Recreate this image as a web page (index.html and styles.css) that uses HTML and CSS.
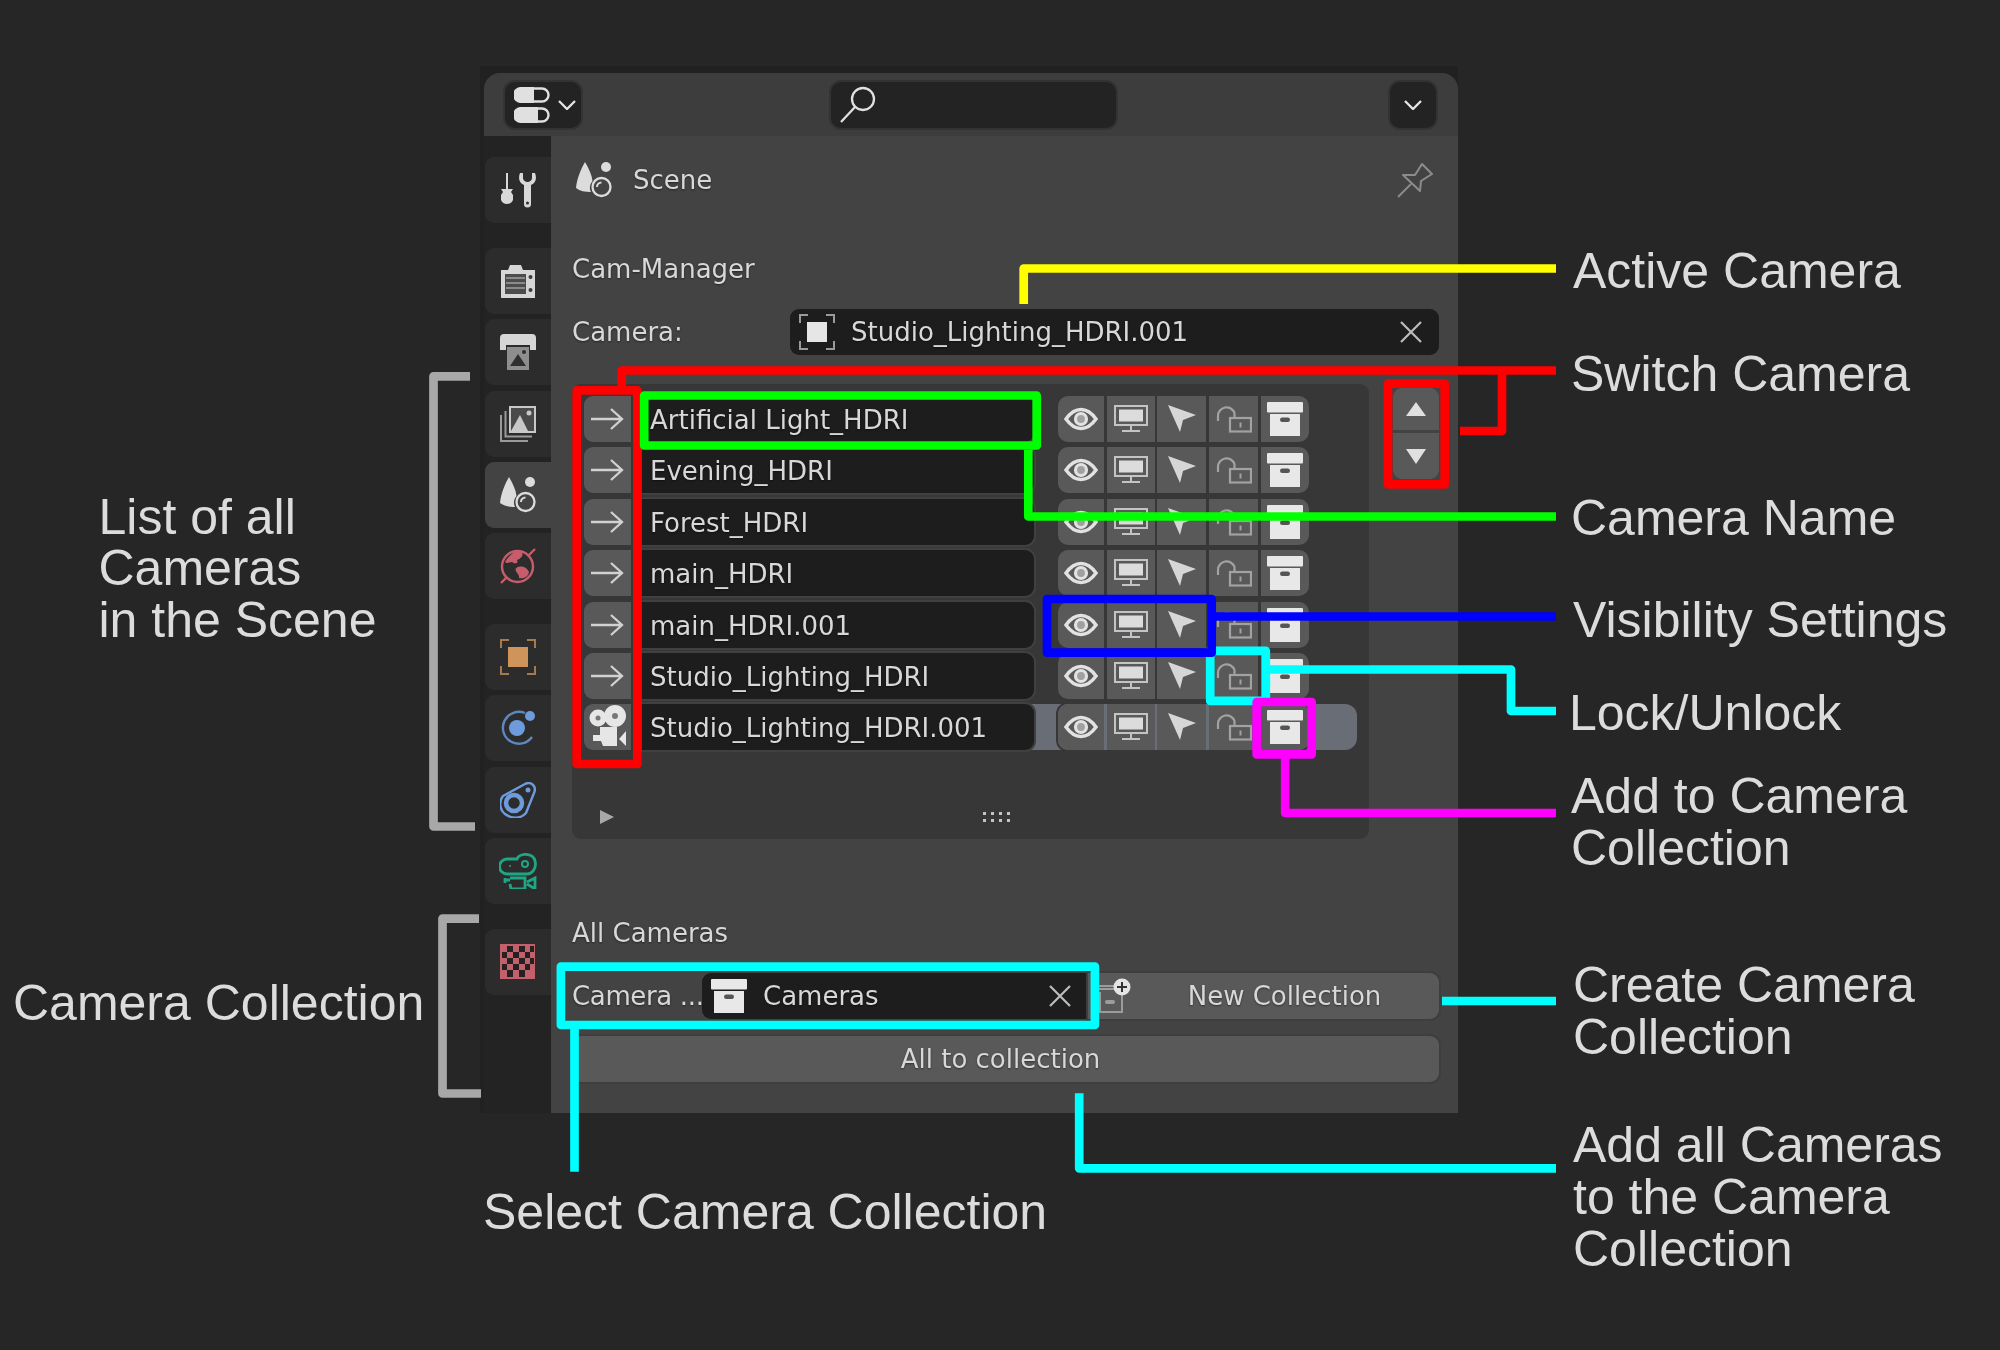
FILE: index.html
```html
<!DOCTYPE html>
<html lang="en">
<head>
<meta charset="utf-8">
<title>Cam-Manager</title>
<link rel="stylesheet" href="styles.css">
</head>
<body>
<svg class="defs" width="0" height="0" aria-hidden="true">
  <symbol id="arrow" viewBox="0 0 36 24"><path d="M1 12H32M21 2L32 12L21 22" fill="none" stroke="#d2d2d2" stroke-width="2.3"/></symbol>
  <symbol id="eye" viewBox="0 0 34 24"><path d="M2 12C7 5 12 2.500 17 2.500S27 5 32 12C27 19 22 21.500 17 21.500S7 19 2 12Z" fill="none" stroke="#e2e2e2" stroke-width="3.500"/><circle cx="17" cy="12" r="5.500" fill="#a0a0a0" stroke="#e2e2e2" stroke-width="3.200"/></symbol>
  <symbol id="monitor" viewBox="0 0 34 28"><rect x="1" y="1" width="32" height="19" fill="none" stroke="#c4c4c4" stroke-width="2"/><rect x="5" y="4.500" width="24" height="12" fill="#dcdcdc"/><path d="M17 20V25M8 26H26" stroke="#c4c4c4" stroke-width="2" fill="none"/></symbol>
  <symbol id="cursor" viewBox="0 0 28 28"><path d="M0 0L28 10L15 15L12 27Z" fill="#d6d6d6"/></symbol>
  <symbol id="lock" viewBox="0 0 36 28"><path d="M2 16V11A8.500 8.500 0 0 1 18.500 8V13" fill="none" stroke="#a2a2a2" stroke-width="2.200"/><rect x="14" y="13" width="21" height="13.500" fill="none" stroke="#a2a2a2" stroke-width="2.200"/><rect x="23.500" y="17.500" width="2" height="5" fill="#a2a2a2"/></symbol>
  <symbol id="box" viewBox="0 0 36 34"><rect x="0" y="0" width="36" height="10.500" rx="1" fill="#e8e8e8"/><path d="M3 12H33V34H3Z" fill="#e8e8e8"/><rect x="13" y="15.500" width="10" height="4.500" rx="2.200" fill="#555"/></symbol>
  <symbol id="x" viewBox="0 0 22 22"><path d="M1 1L21 21M21 1L1 21" stroke="#bdbdbd" stroke-width="2.200" fill="none"/></symbol>
  <symbol id="chev" viewBox="0 0 18 10"><path d="M1 1L9 9L17 1" stroke="#e6e6e6" stroke-width="2.300" fill="none"/></symbol>
  <symbol id="objsel" viewBox="0 0 36 36"><path d="M1 9V1H9M27 1H35V9M35 27V35H27M9 35H1V27" fill="none" stroke="#9a9a9a" stroke-width="2"/><rect x="8" y="8" width="20" height="20" fill="#e6e6e6"/></symbol>
  <symbol id="scene" viewBox="0 0 36 36"><path d="M9 0C13 7 16 13 16.500 19C14 22 13 26 15 30C9 30 4 29 0 26C1 16 5 7 9 0Z" fill="#dcdcdc"/><circle cx="30" cy="5" r="5" fill="#dcdcdc"/><circle cx="25.500" cy="25" r="9" fill="none" stroke="#dcdcdc" stroke-width="2.300"/><path d="M21 25A4.500 4.500 0 0 1 25.500 20.500" fill="none" stroke="#dcdcdc" stroke-width="2"/></symbol>
</svg>

<div class="window">
  <header class="topbar">
    <div class="hbtn editor">
      <svg class="ed-ic" width="36" height="36" viewBox="0 0 36 36"><rect x="1.500" y="1.500" width="33" height="13" rx="6.500" fill="none" stroke="#e0e0e0" stroke-width="2.400"/><path d="M7 0H20V16H7A8 8 0 0 1 7 0Z" fill="#e0e0e0"/><rect x="1.500" y="21.500" width="33" height="13" rx="6.500" fill="none" stroke="#e0e0e0" stroke-width="2.400"/><path d="M7 20H24V36H7A8 8 0 0 1 7 20Z" fill="#e0e0e0"/></svg>
      <svg class="chev" width="18" height="10"><use href="#chev"/></svg>
    </div>
    <div class="hbtn search">
      <svg width="38" height="38" viewBox="0 0 38 38"><circle cx="24" cy="13" r="11" fill="none" stroke="#e0e0e0" stroke-width="2.300"/><path d="M16 21L2 36" stroke="#e0e0e0" stroke-width="2.300"/></svg>
    </div>
    <div class="hbtn drop"><svg width="18" height="10"><use href="#chev"/></svg></div>
  </header>
  <div class="body">
    <nav class="tabs">
      <div class="tabgroup">
        <div class="tab"><svg width="36" height="36" viewBox="0 0 36 36"><path d="M7 1V17" stroke="#d8d8d8" stroke-width="2"/><path d="M1 17H13L11 20L13 23V28A6.500 6.500 0 0 1 1 28V23L3 20Z" fill="#d8d8d8"/><path d="M20 1C18 6 19 11 24 13V32A3.500 3.500 0 0 0 31 32V13C36 11 37 6 35 1L32 1V6A4.500 4 0 0 1 23 6V1Z" fill="#d8d8d8"/><circle cx="27.500" cy="31" r="1.500" fill="#2c2c2c"/></svg></div>
      </div>
      <div class="tabgroup">
        <div class="tab"><svg width="36" height="36" viewBox="0 0 36 36"><path d="M1 7H8L10 2H21L23 7H35V35H1Z" fill="#d6d6d6"/><rect x="5" y="11" width="21" height="20" fill="#4c4c4c"/><path d="M6 15H25M6 20H25M6 25H25" stroke="#9e9e9e" stroke-width="1.500"/><circle cx="30.500" cy="14" r="2" fill="#3a3a3a"/><circle cx="30.500" cy="27" r="2" fill="#3a3a3a"/></svg></div>
        <div class="tab"><svg width="36" height="36" viewBox="0 0 36 36"><path d="M4 0H32A4 4 0 0 1 36 4V16H30V11H6V16H0V4A4 4 0 0 1 4 0Z" fill="#d6d6d6"/><rect x="7" y="13" width="22" height="23" fill="#8e8e8e"/><path d="M10 32L18 20L26 32Z" fill="#2f2f2f"/><circle cx="24" cy="18" r="2" fill="#2f2f2f"/></svg></div>
        <div class="tab"><svg width="36" height="36" viewBox="0 0 36 36"><path d="M1 9V35H28M5.500 5V30.500H32" fill="none" stroke="#9a9a9a" stroke-width="2"/><rect x="10" y="1" width="25" height="25" fill="#4a4a4a" stroke="#c8c8c8" stroke-width="2"/><path d="M11 25L20 9L28 25Z" fill="#c8c8c8"/><circle cx="29" cy="7" r="2.500" fill="#c8c8c8"/></svg></div>
        <div class="tab active"><svg width="36" height="36"><use href="#scene"/></svg></div>
        <div class="tab"><svg width="36" height="36" viewBox="0 0 36 36"><circle cx="17.500" cy="18.500" r="15.500" fill="none" stroke="#c65d6c" stroke-width="2.400"/><path d="M5 14C9 8 13 3 20 3C25 6 22 10 17 12C19 16 14 16 12 14C9 14 7 16 5 14ZM16 20C21 17 27 19 29 24C28 29 24 31 19 30C20 26 14 24 16 20Z" fill="#c65d6c"/><path d="M28 8L35 1M1 35L7 29" stroke="#c65d6c" stroke-width="2.400"/></svg></div>
      </div>
      <div class="tabgroup">
        <div class="tab"><svg width="36" height="36" viewBox="0 0 36 36"><path d="M1 9V1H9M27 1H35V9M35 27V35H27M9 35H1V27" fill="none" stroke="#a67a4e" stroke-width="2"/><rect x="8" y="8" width="20" height="20" fill="#cf9459"/></svg></div>
        <div class="tab"><svg width="36" height="36" viewBox="0 0 36 36"><circle cx="17" cy="18" r="8" fill="#6d9bdc"/><path d="M25 3A16 16 0 1 0 32 27" fill="none" stroke="#5f87bd" stroke-width="2.400"/><circle cx="30" cy="6" r="5" fill="#6d9bdc"/></svg></div>
        <div class="tab"><svg width="36" height="36" viewBox="0 0 36 36"><path d="M3 14L25 2C31 -1 37 4 34 11L26 31C20 38 10 36 5 32C-1 27 -1 19 3 14Z" fill="none" stroke="#6d9bdc" stroke-width="2.400"/><circle cx="14" cy="21" r="8" fill="none" stroke="#6d9bdc" stroke-width="4.500"/><circle cx="14" cy="21" r="2.500" fill="#2c2c2c"/><circle cx="28" cy="8" r="2.500" fill="#6d9bdc"/></svg></div>
        <div class="tab"><svg width="38" height="36" viewBox="0 0 38 36"><path d="M8 21A7.500 7.500 0 0 1 8 6H18C20 0 34 -1 36 8C38 15 33 21 28 21Z" fill="none" stroke="#1fa684" stroke-width="2.800"/><circle cx="26" cy="11" r="3" fill="none" stroke="#1fa684" stroke-width="2"/><circle cx="11" cy="13" r="1" fill="#1fa684"/><path d="M6 27H11M6 25V30M11 25H26V36H12L11 31M28 29L36 25V36L28 31" fill="none" stroke="#1fa684" stroke-width="2.800"/></svg></div>
      </div>
      <div class="tabgroup">
        <div class="tab"><svg width="36" height="36" viewBox="0 0 36 36"><rect width="35" height="35" fill="#c4606c"/><path d="M7 2H13V8H7ZM19 2H25V8H19ZM30 2H34V8H30ZM2 8H7V14H2ZM13 8H19V14H13ZM25 8H30V14H25ZM7 14H13V20H7ZM19 14H25V20H19ZM30 14H34V20H30ZM2 20H7V26H2ZM13 20H19V26H13ZM25 20H30V26H25ZM7 26H13V33H7ZM19 26H25V33H19Z" fill="#222"/></svg></div>
      </div>
    </nav>
    <main class="panel">
      <div class="scene-row">
        <svg width="36" height="36"><use href="#scene"/></svg>
        <span class="scene-name">Scene</span>
        <svg class="pin" width="36" height="36" viewBox="0 0 36 36"><path d="M6 13H18L25 2L35 12L24 19L23 29Z" fill="none" stroke="#8c8c8c" stroke-width="2" stroke-linejoin="round"/><path d="M1 35L14 22" stroke="#8c8c8c" stroke-width="2"/></svg>
      </div>
      <div class="heading">Cam-Manager</div>
      <div class="prop-row">
        <span class="prop-label">Camera:</span>
        <div class="field active-field">
          <svg width="36" height="36"><use href="#objsel"/></svg>
          <span class="field-text">Studio_Lighting_HDRI.001</span>
          <svg class="clear" width="22" height="22"><use href="#x"/></svg>
        </div>
      </div>
      <div class="list-area">
        <div class="listbox">
          <div class="row"><div class="cell switch"><svg width="36" height="24"><use href="#arrow"/></svg></div><div class="name">Artificial Light_HDRI</div><div class="toggles"><span class="cell"><svg width="34" height="24"><use href="#eye"/></svg></span><span class="cell"><svg width="34" height="28"><use href="#monitor"/></svg></span><span class="cell"><svg width="28" height="28"><use href="#cursor"/></svg></span><span class="cell"><svg width="36" height="28"><use href="#lock"/></svg></span><span class="cell"><svg width="36" height="34"><use href="#box"/></svg></span></div></div>
          <div class="row"><div class="cell switch"><svg width="36" height="24"><use href="#arrow"/></svg></div><div class="name">Evening_HDRI</div><div class="toggles"><span class="cell"><svg width="34" height="24"><use href="#eye"/></svg></span><span class="cell"><svg width="34" height="28"><use href="#monitor"/></svg></span><span class="cell"><svg width="28" height="28"><use href="#cursor"/></svg></span><span class="cell"><svg width="36" height="28"><use href="#lock"/></svg></span><span class="cell"><svg width="36" height="34"><use href="#box"/></svg></span></div></div>
          <div class="row"><div class="cell switch"><svg width="36" height="24"><use href="#arrow"/></svg></div><div class="name">Forest_HDRI</div><div class="toggles"><span class="cell"><svg width="34" height="24"><use href="#eye"/></svg></span><span class="cell"><svg width="34" height="28"><use href="#monitor"/></svg></span><span class="cell"><svg width="28" height="28"><use href="#cursor"/></svg></span><span class="cell"><svg width="36" height="28"><use href="#lock"/></svg></span><span class="cell"><svg width="36" height="34"><use href="#box"/></svg></span></div></div>
          <div class="row"><div class="cell switch"><svg width="36" height="24"><use href="#arrow"/></svg></div><div class="name">main_HDRI</div><div class="toggles"><span class="cell"><svg width="34" height="24"><use href="#eye"/></svg></span><span class="cell"><svg width="34" height="28"><use href="#monitor"/></svg></span><span class="cell"><svg width="28" height="28"><use href="#cursor"/></svg></span><span class="cell"><svg width="36" height="28"><use href="#lock"/></svg></span><span class="cell"><svg width="36" height="34"><use href="#box"/></svg></span></div></div>
          <div class="row"><div class="cell switch"><svg width="36" height="24"><use href="#arrow"/></svg></div><div class="name">main_HDRI.001</div><div class="toggles"><span class="cell"><svg width="34" height="24"><use href="#eye"/></svg></span><span class="cell"><svg width="34" height="28"><use href="#monitor"/></svg></span><span class="cell"><svg width="28" height="28"><use href="#cursor"/></svg></span><span class="cell"><svg width="36" height="28"><use href="#lock"/></svg></span><span class="cell"><svg width="36" height="34"><use href="#box"/></svg></span></div></div>
          <div class="row"><div class="cell switch"><svg width="36" height="24"><use href="#arrow"/></svg></div><div class="name">Studio_Lighting_HDRI</div><div class="toggles"><span class="cell"><svg width="34" height="24"><use href="#eye"/></svg></span><span class="cell"><svg width="34" height="28"><use href="#monitor"/></svg></span><span class="cell"><svg width="28" height="28"><use href="#cursor"/></svg></span><span class="cell"><svg width="36" height="28"><use href="#lock"/></svg></span><span class="cell"><svg width="36" height="34"><use href="#box"/></svg></span></div></div>
          <div class="row current"><div class="cell switch"><svg width="38" height="44" viewBox="0 0 38 44"><circle cx="9" cy="13" r="8.500" fill="#e6e6e6"/><circle cx="26" cy="11" r="11" fill="#e6e6e6"/><circle cx="9" cy="13" r="2.500" fill="#777"/><circle cx="26" cy="11" r="3" fill="#777"/><path d="M11 22H28V41H14L12 36H4V30H11Z" fill="#e6e6e6"/><path d="M37 26V41L30 34Z" fill="#e6e6e6"/></svg></div><div class="name">Studio_Lighting_HDRI.001</div><div class="toggles"><span class="cell"><svg width="34" height="24"><use href="#eye"/></svg></span><span class="cell"><svg width="34" height="28"><use href="#monitor"/></svg></span><span class="cell"><svg width="28" height="28"><use href="#cursor"/></svg></span><span class="cell"><svg width="36" height="28"><use href="#lock"/></svg></span><span class="cell"><svg width="36" height="34"><use href="#box"/></svg></span></div></div>
          <div class="list-foot">
            <svg width="14" height="14" viewBox="0 0 14 14"><path d="M0 0L14 7L0 14Z" fill="#a8a8a8"/></svg>
            <svg class="grip" width="27" height="10" viewBox="0 0 27 10"><path d="M0 0h3v3H0zM8 0h3v3H8zM16 0h3v3h-3zM24 0h3v3h-3zM0 7h3v3H0zM8 7h3v3H8zM16 7h3v3h-3zM24 7h3v3h-3z" fill="#c4c4c4"/></svg>
          </div>
        </div>
        <div class="updown">
          <div class="ud-btn ud-top"><svg width="20" height="14" viewBox="0 0 20 14"><path d="M10 0L20 14H0Z" fill="#e0e0e0"/></svg></div>
          <div class="ud-btn ud-bottom"><svg width="20" height="15" viewBox="0 0 20 15"><path d="M0 0H20L10 15Z" fill="#e0e0e0"/></svg></div>
        </div>
      </div>
      <div class="heading all-cameras">All Cameras</div>
      <div class="prop-row">
        <span class="prop-label short">Camera ...</span>
        <div class="field coll-field">
          <svg width="36" height="34"><use href="#box"/></svg>
          <span class="field-text">Cameras</span>
          <svg class="clear" width="22" height="22"><use href="#x"/></svg>
        </div>
        <div class="button new-coll">
          <svg class="new-ic" width="34" height="36" viewBox="0 0 34 36"><path d="M0 8H18M2 14V34H24V16M0 11H18" fill="none" stroke="#9c9c9c" stroke-width="2"/><rect x="7" y="22" width="10" height="4" rx="2" fill="#9c9c9c"/><circle cx="24" cy="9" r="8.500" fill="#e4e4e4"/><path d="M24 4V14M19 9H29" stroke="#333" stroke-width="2"/></svg>
          <span>New Collection</span>
        </div>
      </div>
      <div class="button all-btn">All to collection</div>
    </main>
  </div>
</div>

<svg class="overlay" width="2000" height="1350" viewBox="0 0 2000 1350" fill="none" stroke-width="8.700" stroke-linejoin="round" aria-hidden="true">
  <path d="M470 376.300H433.500V826.500H475M479 918.700H442.500V1093.500H481" stroke="#a8a8a8"/>
  <path d="M1023.700 304V268.500H1556" stroke="#ffff00"/>
  <path d="M621.700 386V370.500H1556M1502 370.500V431H1460" stroke="#ff0000"/>
  <rect x="576.700" y="390.400" width="60.600" height="373.600" stroke="#ff0000"/>
  <rect x="1388" y="383.700" width="56.700" height="100.700" stroke="#ff0000"/>
  <rect x="644.200" y="395.500" width="392.500" height="50" stroke="#00ff00"/>
  <path d="M1028.300 450V516.500H1556" stroke="#00ff00"/>
  <rect x="1210.200" y="650.800" width="55.600" height="50" stroke="#00ffff"/>
  <path d="M1270 669.500H1511V711H1556" stroke="#00ffff"/>
  <rect x="1047" y="599" width="164.700" height="53.700" stroke="#0000ff"/>
  <path d="M1216 616.500H1556" stroke="#0000ff"/>
  <rect x="1256.700" y="702" width="55" height="52.400" stroke="#ff00ff"/>
  <path d="M1285.200 758V813H1556" stroke="#ff00ff"/>
  <rect x="560.900" y="966.700" width="534" height="58.300" stroke="#00ffff"/>
  <path d="M574.500 1029V1171.700M1442 1001H1556M1079.200 1093.300V1168.300H1556" stroke="#00ffff"/>
</svg>

<div class="note n-active">Active Camera</div>
<div class="note n-switch">Switch Camera</div>
<div class="note n-name">Camera Name</div>
<div class="note n-vis">Visibility Settings</div>
<div class="note n-lock">Lock/Unlock</div>
<div class="note n-add">Add to Camera<br>Collection</div>
<div class="note n-create">Create Camera<br>Collection</div>
<div class="note n-all">Add all Cameras<br>to the Camera<br>Collection</div>
<div class="note n-list">List of all<br>Cameras<br>in the Scene</div>
<div class="note n-coll">Camera Collection</div>
<div class="note n-select">Select Camera Collection</div>
</body>
</html>
```
FILE: styles.css
```css
* { box-sizing: border-box; }
html, body { margin: 0; padding: 0; }
body {
  position: relative;
  width: 2000px;
  height: 1350px;
  overflow: hidden;
  background: #262626;
  padding: 66px 0 0 480px;
  font-family: "DejaVu Sans", sans-serif;
  font-size: 26px;
  color: #d8d8d8;
}
svg { display: block; flex: none; }
.defs { position: absolute; }

.window {
  width: 978px;
  height: 1047px;
  padding: 7px 0 0 4px;
  background: #212121;
  filter: blur(0.45px);
  text-shadow: 0 1px 2px rgba(0, 0, 0, .45);
}

.topbar {
  display: flex;
  align-items: center;
  height: 63px;
  padding: 0 20px 0 19px;
  background: #3d3d3d;
  border-radius: 16px 16px 0 0;
}
.hbtn {
  display: flex;
  align-items: center;
  height: 50px;
  background: #232323;
  border: 2px solid #333;
  border-radius: 12px;
}
.editor { width: 80px; padding-left: 9px; gap: 8px; }
.search { width: 289px; margin-left: 246px; padding-left: 8px; }
.drop { width: 50px; margin-left: auto; justify-content: center; }

.body { display: flex; height: 977px; }
.tabs {
  width: 67px;
  padding-top: 21px;
  background: #232323;
  display: flex;
  flex-direction: column;
  gap: 25px;
}
.tabgroup { display: flex; flex-direction: column; gap: 5.3px; }
.tab {
  height: 66px;
  margin-left: 1px;
  display: flex;
  align-items: center;
  justify-content: center;
  background: #2c2c2c;
  border-radius: 9px 0 0 9px;
}
.tab.active { background: #434343; }

.panel {
  flex: 1;
  padding: 26px 19px 0 21px;
  background: #434343;
}
.scene-row { display: flex; align-items: center; height: 36px; padding-left: 4px; }
.scene-name { margin-left: 21px; }
.pin { margin-left: auto; margin-right: 6px; }
.heading { height: 46px; line-height: 46px; margin-top: 48px; }
.all-cameras { margin-top: 71px; }

.prop-row { display: flex; height: 46px; margin-top: 17px; align-items: center; }
.prop-label { width: 218px; white-space: nowrap; }
.prop-label.short { width: 130px; letter-spacing: -0.35px; }
.field {
  display: flex;
  align-items: center;
  height: 46px;
  background: #1d1d1d;
  border-radius: 9px;
}
.active-field { width: 649px; padding: 0 17px 0 9px; }
.coll-field { width: 386px; padding: 0 17px 0 9px; border-radius: 9px 0 0 9px; }
.field-text { margin-left: 16px; }
.clear { margin-left: auto; }

.list-area { display: flex; gap: 24px; margin-top: 29px; align-items: flex-start; }
.listbox {
  width: 797px;
  height: 455px;
  padding: 12px 12px 0;
  background: #373737;
  border-radius: 9px;
  display: flex;
  flex-direction: column;
  gap: 5.4px;
}
.row { display: flex; align-items: stretch; width: 773px; height: 46px; }
.row.current {
  background: linear-gradient(to right, transparent 440px, #686d76 440px);
  border-radius: 0 12px 12px 0;
}
.cell {
  display: flex;
  align-items: center;
  justify-content: center;
  background: #595959;
}
.switch { width: 47px; border-radius: 9px 0 0 9px; }
.name {
  width: 392px;
  margin-left: 11px;
  padding-left: 8px;
  line-height: 48px;
  background: #1d1d1d;
  border-radius: 0 9px 9px 0;
  box-shadow: 0 0 0 2px #404040;
}
.toggles {
  display: grid;
  grid-template-columns: 46px 48px 49px 49px 48px;
  column-gap: 2.700px;
  width: 251px;
  margin-left: 24px;
  border-radius: 10px;
}
.current .toggles { box-shadow: 0 0 0 2px #373737; }
.toggles .cell:first-child { border-radius: 10px 0 0 10px; }
.toggles .cell:last-child { border-radius: 0 10px 10px 0; }

.list-foot { display: flex; align-items: center; height: 14px; margin-top: 54px; padding-left: 16px; }
.grip { margin-left: 369px; }

.updown { width: 46px; margin-top: 4px; display: flex; flex-direction: column; gap: 3px; }
.ud-btn { height: 45px; display: flex; align-items: center; justify-content: center; background: #595959; }
.ud-top { border-radius: 9px 9px 0 0; height: 42px; }
.ud-bottom { height: 46px; border-radius: 0 0 9px 9px; }

.button {
  height: 46px;
  display: flex;
  align-items: center;
  justify-content: center;
  background: #595959;
  border-radius: 9px;
  box-shadow: 0 0 0 2px #3e3e3e;
}
.new-coll { width: 351px; position: relative; padding-left: 42px; border-radius: 0 9px 9px 0; }
.new-ic { position: absolute; left: 10px; top: 5px; }
.all-btn { width: 867px; margin-top: 17px; padding-right: 10px; }

.overlay { position: absolute; left: 0; top: 0; }

.note {
  position: absolute;
  font-family: "Liberation Sans", Arial, sans-serif;
  font-size: 50px;
  line-height: 51.8px;
  color: #dcdcdc;
  white-space: nowrap;
}
.n-active { left: 1573px; top: 246px; }
.n-switch { left: 1571px; top: 348.500px; }
.n-name { left: 1571px; top: 492.500px; }
.n-vis { left: 1573px; top: 595px; }
.n-lock { left: 1569px; top: 688px; }
.n-add { left: 1571px; top: 771px; }
.n-create { left: 1573px; top: 960px; }
.n-all { left: 1573px; top: 1120px; }
.n-list { left: 98.500px; top: 491.500px; }
.n-coll { left: 13px; top: 978px; }
.n-select { left: 483px; top: 1187px; }
```
